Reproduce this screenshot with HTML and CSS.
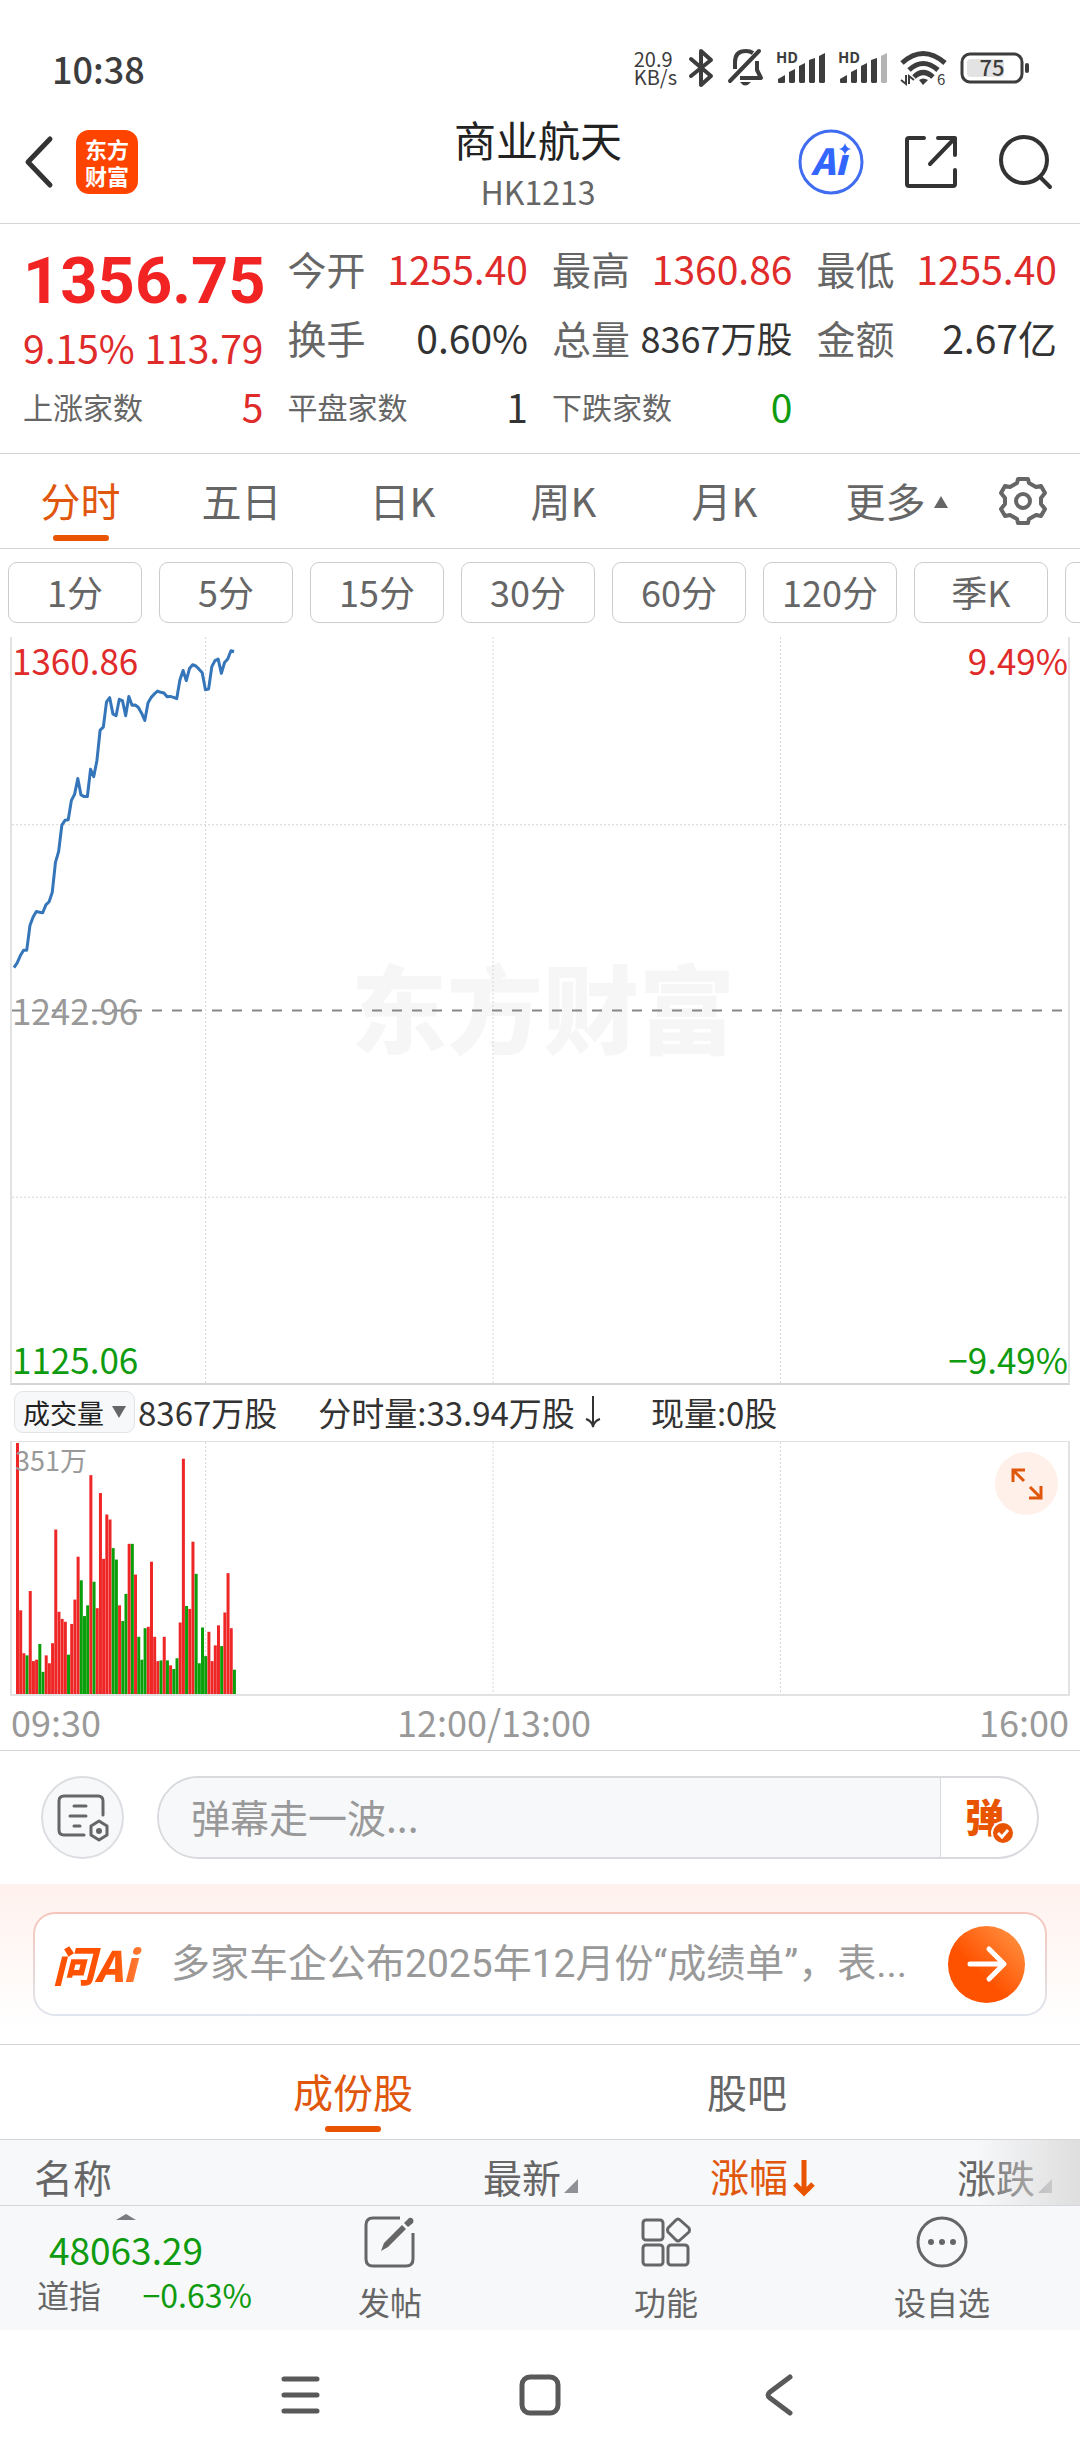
FILE: index.html
```html
<!DOCTYPE html>
<html lang="zh-CN">
<head>
  <meta charset="UTF-8">
  <meta name="viewport" content="width=device-width, initial-scale=1.0">
  <title>商业航天 HK1213</title>
  <link rel="stylesheet" href="styles.css">
</head>
<body>
  <!-- Status bar -->
  <div class="status-bar">
    <span class="clock">10:38</span>
    <div class="status-icons">
      <div class="net-speed"><span>20.9</span><span>KB/s</span></div>
      <svg class="bluetooth" width="24" height="38" viewBox="0 0 24 38" fill="none" stroke="#3d3d3d" stroke-width="4" stroke-linecap="round" stroke-linejoin="round">
        <path d="M2 10 L22 27 L12 36 V2 L22 11 L2 27"/>
      </svg>
      <svg class="bell" width="36" height="39" viewBox="0 0 36 39" fill="none" stroke="#3d3d3d" stroke-width="4">
        <path d="M7 21 V14 Q7 3 18 3 Q22 3 25 5 M29 13 V22 L33 30 H12" stroke-linejoin="round"/>
        <path d="M2 33 L31 3" stroke-linecap="round"/>
        <path d="M12 34 H23 Q17 41 12 34 Z" fill="#3d3d3d" stroke="none"/>
      </svg>
      <svg class="signal" width="50" height="34" viewBox="0 0 50 34" fill="#3d3d3d">
        <text class="hd" x="0" y="12">HD</text>
        <path d="M2 31 V28 L9 24 V31 Q9 32 8 32 H3 Q2 32 2 31 Z M13 21 L19 18 V31 L18 32 H14 L13 31 Z M23 15 L29 12 V31 L28 32 H24 L23 31 Z M33 9 L39 7 V31 L38 32 H34 L33 31 Z M43 5 L49 2 V31 L48 32 H44 L43 31 Z"/>
      </svg>
      <svg class="signal" width="50" height="34" viewBox="0 0 50 34" fill="#3d3d3d">
        <text class="hd" x="0" y="12">HD</text>
        <path d="M2 31 V28 L9 24 V31 Q9 32 8 32 H3 Q2 32 2 31 Z M13 21 L19 18 V31 L18 32 H14 L13 31 Z M23 15 L29 12 V31 L28 32 H24 L23 31 Z M33 9 L39 7 V31 L38 32 H34 L33 31 Z"/>
        <path d="M43 5 L49 2 V31 L48 32 H44 L43 31 Z" fill="#b4b4b4"/>
      </svg>
      <svg class="wifi" width="48" height="38" viewBox="0 0 48 38" fill="none" stroke="#3d3d3d" stroke-width="5">
        <path d="M2 14 Q23 -5 45 14 M9 21 Q23 8 38 21 M14 28 Q23 19 33 28"/>
        <path d="M19 31 Q23 28 28 31 L23 36 Z" fill="#3d3d3d" stroke="none"/>
        <path d="M6 26 V35 L1 31 M9 35 V27 L14 31" stroke-width="2"/>
        <text class="wifi-gen" x="37" y="36">6</text>
      </svg>
      <svg class="battery" width="72" height="32" viewBox="0 0 72 32" fill="none">
        <rect x="7" y="7" width="37" height="18" rx="4" fill="#e3e3e3"/>
        <rect x="2" y="2" width="60" height="28" rx="8" stroke="#3d3d3d" stroke-width="3"/>
        <rect x="65" y="11" width="4" height="10" rx="2" fill="#3d3d3d"/>
        <text class="battery-level" x="32" y="24" text-anchor="middle">75</text>
      </svg>
    </div>
  </div>

  <!-- Header -->
  <header class="header">
    <div class="header-side">
      <button class="icon-btn" type="button" aria-label="返回">
        <svg width="32" height="54" viewBox="0 0 32 54" fill="none" stroke="#333" stroke-width="5" stroke-linecap="round" stroke-linejoin="round"><path d="M28 4 L6 27 L28 50"/></svg>
      </button>
      <a class="brand" href="#">东方<br>财富</a>
    </div>
    <div class="header-title">
      <h1>商业航天</h1>
      <p>HK1213</p>
    </div>
    <div class="header-side header-actions">
      <button class="icon-btn" type="button" aria-label="Ai">
        <svg width="66" height="66" viewBox="0 0 66 66">
          <circle cx="33" cy="33" r="31" fill="#fff" stroke="#3f6cf0" stroke-width="3"/>
          <text class="ai-mark" x="31" y="46" text-anchor="middle">Ai</text>
          <path d="M38 13 H54 V26 H38 Z" fill="#fff"/>
          <path d="M47 14 Q48 19 53 20 Q48 21 47 26 Q46 21 41 20 Q46 19 47 14 Z" fill="#3366ff"/>
        </svg>
      </button>
      <button class="icon-btn" type="button" aria-label="分享">
        <svg width="54" height="54" viewBox="0 0 54 54" fill="none" stroke="#333" stroke-width="4" stroke-linecap="round" stroke-linejoin="round">
          <path d="M20 3 H5 Q3 3 3 5 V49 Q3 51 5 51 H49 Q51 51 51 49 V35 M34 3 H51 V20 M50 4 L26 29"/>
        </svg>
      </button>
      <button class="icon-btn" type="button" aria-label="搜索">
        <svg width="56" height="56" viewBox="0 0 56 56" fill="none" stroke="#333" stroke-width="4" stroke-linecap="round">
          <circle cx="26" cy="26" r="23"/><path d="M42 43 L52 53"/>
        </svg>
      </button>
    </div>
  </header>

  <!-- Quote -->
  <section class="quote">
    <div class="quote-main">
      <div class="price">1356.75</div>
      <div class="quote-cell up"><span>9.15%</span><span>113.79</span></div>
      <div class="quote-cell"><span class="small-label">上涨家数</span><span class="up">5</span></div>
    </div>
    <div class="quote-grid">
      <div class="quote-cell"><span class="label">今开</span><span class="up">1255.40</span></div>
      <div class="quote-cell"><span class="label">最高</span><span class="up">1360.86</span></div>
      <div class="quote-cell"><span class="label">最低</span><span class="up">1255.40</span></div>
      <div class="quote-cell"><span class="label">换手</span><span>0.60%</span></div>
      <div class="quote-cell"><span class="label">总量</span><span class="long-value">8367万股</span></div>
      <div class="quote-cell"><span class="label">金额</span><span>2.67亿</span></div>
      <div class="quote-cell"><span class="small-label">平盘家数</span><span>1</span></div>
      <div class="quote-cell"><span class="small-label">下跌家数</span><span class="down">0</span></div>
    </div>
  </section>

  <!-- Chart tabs -->
  <nav class="chart-tabs">
    <button class="tab active" type="button">分时</button>
    <button class="tab" type="button">五日</button>
    <button class="tab" type="button">日K</button>
    <button class="tab" type="button">周K</button>
    <button class="tab" type="button">月K</button>
    <button class="tab" type="button"><span class="more">更多</span></button>
    <button class="settings" type="button" aria-label="设置">
      <svg width="50" height="50" viewBox="-25 -25 50 50" fill="none" stroke="#666" stroke-width="4" stroke-linejoin="round">
        <path d="M-5 -22 H5 L6 -18 L13 -14 L18 -15 L22 -8 L18 -3 V3 L22 8 L18 15 L13 14 L6 18 L5 22 H-5 L-6 18 L-13 14 L-18 15 L-22 8 L-18 3 V-3 L-22 -8 L-18 -15 L-13 -14 L-6 -18 Z"/>
        <circle r="7"/>
      </svg>
    </button>
  </nav>

  <div class="periods">
    <button type="button">1分</button>
    <button type="button">5分</button>
    <button type="button">15分</button>
    <button type="button">30分</button>
    <button type="button">60分</button>
    <button type="button">120分</button>
    <button type="button">季K</button>
    <button type="button" aria-label="年K"></button>
  </div>

  <!-- Price chart -->
  <section class="chart price-chart">
    <div class="watermark">东方财富</div>
    <svg viewBox="0 0 1058 747" preserveAspectRatio="none">
      <path class="grid-line" d="M194 0 V747 M482 0 V747 M770 0 V747 M0 188 H1058 M0 561 H1058"/>
      <path class="mid-line" d="M0 374 H1058"/>
      <polyline id="price-line" class="price-line"/>
    </svg>
    <span class="axis top-left up">1360.86</span>
    <span class="axis top-right up">9.49%</span>
    <span class="axis mid-left">1242.96</span>
    <span class="axis bottom-left down">1125.06</span>
    <span class="axis bottom-right down">−9.49%</span>
  </section>

  <div class="volume-head">
    <select class="indicator" aria-label="指标"><option>成交量</option></select>
    <span class="volume-total">8367万股</span>
    <span class="volume-minute">分时量:33.94万股
      <svg width="18" height="34" viewBox="0 0 18 34" fill="none" stroke="#333" stroke-width="2"><path d="M9 1 V32 M2 24 Q8 26 9 32 Q10 26 16 24"/></svg>
    </span>
    <span>现量:0股</span>
  </div>

  <!-- Volume chart -->
  <section class="chart volume-chart">
    <svg viewBox="0 0 1058 254" preserveAspectRatio="none">
      <path class="grid-line" d="M194 0 V254 M482 0 V254 M770 0 V254"/>
      <g id="volume-bars"></g>
    </svg>
    <span class="volume-max">351万</span>
    <button class="expand" type="button" aria-label="全屏">
      <svg width="34" height="34" viewBox="0 0 34 34" fill="none" stroke="#e0570c" stroke-width="3">
        <path d="M3 15 V3 H15 M3 3 L14 14 M31 19 V31 H19 M31 31 L20 20"/>
      </svg>
    </button>
  </section>

  <div class="time-axis">
    <span>09:30</span>
    <span class="noon">12:00/13:00</span>
    <span>16:00</span>
  </div>

  <!-- Danmu -->
  <form class="danmu">
    <button class="danmu-settings" type="button" aria-label="弹幕设置">
      <svg width="54" height="50" viewBox="0 0 54 50" fill="none" stroke="#666" stroke-width="3" stroke-linecap="round">
        <path d="M28 42 H8 Q3 42 3 37 V8 Q3 3 8 3 H42 Q47 3 47 8 V22"/>
        <path d="M18 13 H30 M14 23 H30 M18 33 H24"/>
        <path d="M43 28 L51 33 V42 L43 47 L35 42 V33 Z" stroke-linejoin="round"/>
        <circle cx="43" cy="38" r="3" fill="#666" stroke="none"/>
      </svg>
    </button>
    <div class="danmu-box">
      <input type="text" placeholder="弹幕走一波..." aria-label="弹幕">
      <button type="button" class="danmu-toggle">弹
        <svg class="danmu-check" width="24" height="24" viewBox="0 0 24 24" fill="none"><circle cx="12" cy="12" r="11" fill="#e85400" stroke="#fff" stroke-width="2"/><path d="M7 12 L11 16 L17 9" stroke="#fff" stroke-width="3"/></svg>
      </button>
    </div>
  </form>

  <!-- Ask Ai -->
  <section class="ask">
    <a class="ask-box" href="#">
      <span class="ask-logo">问Ai</span>
      <span class="ask-text">多家车企公布2025年12月份“成绩单”，表...</span>
      <span class="ask-go">
        <svg width="40" height="36" viewBox="0 0 40 36" fill="none" stroke="#fff" stroke-width="5" stroke-linecap="round" stroke-linejoin="round"><path d="M3 18 H37 M22 3 L37 18 L22 33"/></svg>
      </span>
    </a>
  </section>

  <!-- Constituents -->
  <nav class="list-tabs">
    <button class="tab active" type="button">成份股</button>
    <button class="tab" type="button">股吧</button>
  </nav>
  <div class="list-wrap">
    <table class="list">
      <thead>
        <tr>
          <th class="name">名称</th>
          <th><span class="sortable">最新</span></th>
          <th class="sorted">涨幅<svg width="22" height="38" viewBox="0 0 22 38" fill="none" stroke="#e85400" stroke-width="5"><path d="M11 1 V34 M2 25 L11 34 L20 25"/></svg></th>
          <th><span class="sortable">涨跌</span></th>
        </tr>
      </thead>
    </table>
  </div>

  <!-- Bottom bar -->
  <footer class="bottom-bar">
    <a class="index" href="#">
      <span class="index-caret"></span>
      <span class="index-value">48063.29</span>
      <span class="index-row"><span>道指</span><span class="down">−0.63%</span></span>
    </a>
    <button type="button">
      <svg width="52" height="52" viewBox="0 0 52 52" fill="none" stroke="#666" stroke-width="3">
        <path d="M36 2 H9 Q2 2 2 9 V43 Q2 50 9 50 H42 Q49 50 49 43 V17"/>
        <path d="M17 35 L20 27 L38 9 L42 13 L24 31 Z M40 7 L45 2 Q47 1 49 3 Q50 5 49 7 L44 11 Z" fill="#666" stroke="none"/>
      </svg>
      发帖
    </button>
    <button type="button">
      <svg width="52" height="52" viewBox="0 0 52 52" fill="none" stroke="#666" stroke-width="3" stroke-linejoin="round">
        <rect x="3" y="4" width="20" height="20" rx="3"/>
        <rect x="3" y="29" width="20" height="20" rx="3"/>
        <rect x="28" y="29" width="20" height="20" rx="3"/>
        <path d="M36 4 Q38 2 40 4 L49 12 Q50 14 49 16 L40 24 Q38 26 36 24 L28 16 Q27 14 28 12 Z"/>
      </svg>
      功能
    </button>
    <button type="button">
      <svg width="52" height="52" viewBox="0 0 52 52" fill="none" stroke="#666" stroke-width="3">
        <circle cx="26" cy="26" r="24"/>
        <g fill="#666" stroke="none"><circle cx="15" cy="26" r="3"/><circle cx="26" cy="26" r="3"/><circle cx="37" cy="26" r="3"/></g>
      </svg>
      设自选
    </button>
  </footer>

  <!-- System navigation -->
  <nav class="system-nav">
    <button type="button" aria-label="菜单"><svg width="42" height="42" viewBox="0 0 42 42" stroke="#595959" stroke-width="5" stroke-linecap="round"><path d="M4 5 H37 M4 21 H37 M4 37 H37"/></svg></button>
    <button type="button" aria-label="主页"><svg width="42" height="42" viewBox="0 0 42 42" fill="none" stroke="#595959" stroke-width="5"><rect x="3" y="3" width="36" height="36" rx="8"/></svg></button>
    <button type="button" aria-label="返回"><svg width="42" height="42" viewBox="0 0 42 42" fill="none" stroke="#595959" stroke-width="5" stroke-linecap="round" stroke-linejoin="round"><path d="M32 3 L12 18 Q8 21 12 24 L32 39"/></svg></button>
  </nav>

  <script src="script.js"></script>
</body>
</html>
```
FILE: styles.css
```css
* {
  box-sizing: border-box;
}
body {
  margin: 0;
  background: #fff;
  color: #333;
  font-family: "Noto Sans CJK SC", sans-serif;
  font-size: 39px;
  line-height: 1;
  overflow-x: hidden;
}
button, input, select {
  font-family: inherit;
  font-size: inherit;
  line-height: inherit;
  color: inherit;
  border: none;
  background: none;
  padding: 0;
  margin: 0;
}
button {
  cursor: pointer;
}
a {
  color: inherit;
  text-decoration: none;
}
svg {
  display: block;
  flex: none;
  overflow: visible;
}
.up {
  color: #e02b2b;
}
.down {
  color: #0f9b0f;
}

/* Status bar */
.status-bar {
  display: flex;
  justify-content: space-between;
  align-items: center;
  height: 101px;
  padding: 34px 48px 0 52px;
  color: #3d3d3d;
}
.clock {
  font-size: 36px;
  font-weight: 500;
}
.status-icons {
  display: flex;
  align-items: center;
  gap: 12px;
}
.net-speed {
  display: flex;
  flex-direction: column;
  font-size: 20px;
  line-height: 18px;
}
.bell {
  margin-left: 3px;
}
.hd {
  font-size: 15px;
  font-weight: 700;
}
.wifi-gen {
  font-size: 15px;
  fill: #3d3d3d;
  stroke: none;
}
.battery-level {
  font-size: 22px;
  font-weight: 500;
  fill: #3d3d3d;
}

/* Header */
.header {
  display: flex;
  align-items: center;
  height: 123px;
  padding: 0 26px 0 22px;
  border-bottom: 1px solid #d4d4d4;
}
.header-side {
  flex: 1;
  display: flex;
  align-items: center;
  gap: 22px;
}
.header-actions {
  justify-content: flex-end;
  gap: 40px;
}
.brand {
  display: flex;
  align-items: center;
  justify-content: center;
  width: 62px;
  height: 64px;
  border-radius: 13px;
  background: #ff4400;
  color: #fff;
  font-size: 22px;
  line-height: 27px;
  font-weight: 700;
}
.ai-mark {
  font-size: 36px;
  font-weight: 900;
  font-style: italic;
  fill: #3366ff;
}
.header-title {
  text-align: center;
}
.header-title h1 {
  margin: 2px 0 0;
  color: #222;
  font-size: 42px;
  line-height: 50px;
  font-weight: 400;
}
.header-title p {
  margin: 6px 0 0;
  color: #666;
  font-size: 32px;
  line-height: 42px;
}

/* Quote */
.quote {
  display: grid;
  grid-template-columns: repeat(4, minmax(0, 1fr));
  gap: 24px;
  padding: 18px 23px 21px;
  border-bottom: 1px solid #d4d4d4;
}
.quote-main {
  display: grid;
  grid-template-columns: minmax(0, 1fr);
  grid-template-rows: 72px 66px 52px;
}
.quote-grid {
  grid-column: span 3;
  display: grid;
  grid-template-columns: repeat(3, minmax(0, 1fr));
  grid-template-rows: 52px 86px 52px;
  column-gap: 24px;
}
.price {
  color: #f22323;
  font-family: Roboto, sans-serif;
  font-size: 65px;
  line-height: 78px;
  font-weight: 700;
}
.quote-cell {
  display: flex;
  justify-content: space-between;
  align-items: center;
  white-space: nowrap;
}
.label {
  color: #666;
}
.small-label {
  color: #666;
  font-size: 30px;
}
.long-value {
  font-size: 36px;
}

/* Tabs */
.chart-tabs {
  display: flex;
  height: 95px;
  border-bottom: 1px solid #d4d4d4;
}
.tab {
  flex: 1;
  position: relative;
  padding-bottom: 2px;
  color: #666;
  font-size: 40px;
}
.tab.active {
  color: #e0570c;
}
.tab.active::after {
  content: "";
  position: absolute;
  left: 50%;
  bottom: 7px;
  width: 56px;
  height: 6px;
  margin-left: -28px;
  border-radius: 3px;
  background: #e85400;
}
.more {
  position: relative;
}
.more::after {
  content: "";
  position: absolute;
  left: 100%;
  top: 50%;
  margin: -4px 0 0 8px;
  border: 7px solid transparent;
  border-top: none;
  border-bottom: 12px solid #666;
}
.settings {
  display: flex;
  justify-content: center;
  align-items: center;
  width: 114px;
}
.periods {
  display: flex;
  gap: 17px;
  padding: 13px 0 14px 8px;
  overflow: hidden;
}
.periods button {
  flex: none;
  width: 134px;
  height: 61px;
  padding-bottom: 3px;
  border: 1px solid #ccc;
  border-radius: 9px;
  color: #666;
  font-size: 36px;
}

/* Charts */
.chart {
  position: relative;
  margin: 0 10px;
  border: 2px solid #e2e2e2;
}
.price-chart {
  height: 748px;
  border-top: none;
  border-bottom-color: #d4d4d4;
}
.price-chart > svg,
.volume-chart > svg {
  position: relative;
  width: 100%;
  height: 100%;
}
.grid-line {
  fill: none;
  stroke: #d6d6d6;
  stroke-dasharray: 2 2;
  vector-effect: non-scaling-stroke;
}
.mid-line {
  stroke: #888;
  stroke-width: 2;
  stroke-dasharray: 10 10;
  vector-effect: non-scaling-stroke;
}
.price-line {
  fill: none;
  stroke: #3575b9;
  stroke-width: 3;
  stroke-linejoin: round;
  vector-effect: non-scaling-stroke;
}
.watermark {
  position: absolute;
  inset: 0;
  display: flex;
  align-items: center;
  justify-content: center;
  padding: 0 0 10px 6px;
  color: #f6f6f6;
  font-size: 96px;
  font-weight: 900;
}
.axis {
  position: absolute;
  color: #999;
  font-size: 35px;
}
.axis.up {
  color: #e02b2b;
}
.axis.down {
  color: #0f9b0f;
}
.top-left,
.mid-left,
.bottom-left {
  left: 0;
}
.top-right,
.bottom-right {
  right: 0;
}
.top-left,
.top-right {
  top: 5px;
}
.mid-left {
  top: 355px;
}
.bottom-left,
.bottom-right {
  bottom: 7px;
}
.volume-head {
  display: flex;
  align-items: center;
  height: 56px;
  padding: 0 0 2px 14px;
  font-size: 33px;
}
.indicator {
  appearance: none;
  height: 42px;
  width: 121px;
  padding-left: 8px;
  border: 1px solid #e2e3e6;
  border-radius: 9px;
  background: #f7f8fa url("data:image/svg+xml,%3Csvg xmlns='http://www.w3.org/2000/svg' width='14' height='12'%3E%3Cpath d='M0 0H14L7 12Z' fill='%23666'/%3E%3C/svg%3E") no-repeat right 8px center;
  color: #222;
  font-size: 27px;
}
.volume-total {
  margin: 0 41px 0 3px;
}
.volume-minute {
  display: flex;
  align-items: center;
  gap: 9px;
  margin-right: 49px;
}
.volume-chart {
  height: 255px;
  border-top-width: 1px;
}
.bar-up {
  fill: #ee2626;
}
.bar-down {
  fill: #0a9f0a;
}
.volume-max {
  position: absolute;
  left: 3px;
  top: 4px;
  color: #999;
  font-size: 27px;
}
.expand {
  position: absolute;
  right: 10px;
  top: 10px;
  display: flex;
  align-items: center;
  justify-content: center;
  width: 63px;
  height: 63px;
  border-radius: 50%;
  background: #fff0e9;
}
.time-axis {
  display: grid;
  grid-template-columns: 1fr auto 1fr;
  align-items: center;
  height: 55px;
  padding: 0 11px 4px;
  border-bottom: 1px solid #d4d4d4;
  color: #999;
  font-size: 36px;
}
.time-axis .noon {
  margin-right: 92px;
}
.time-axis :last-child {
  text-align: right;
}

/* Danmu */
.danmu {
  display: flex;
  gap: 33px;
  padding: 25px 41px;
}
.danmu-settings {
  display: flex;
  align-items: center;
  justify-content: center;
  width: 83px;
  height: 83px;
  border: 2px solid #dcdee2;
  border-radius: 50%;
  background: #f7f8fa;
}
.danmu-box {
  flex: 1;
  display: flex;
  height: 83px;
  border: 2px solid #d8dade;
  border-radius: 42px;
  overflow: hidden;
}
.danmu-box input {
  flex: 1;
  min-width: 0;
  padding: 0 32px 4px;
  background: #f7f8fa;
}
.danmu-box input::placeholder {
  color: #999;
  opacity: 1;
}
.danmu-toggle {
  position: relative;
  width: 97px;
  padding: 0 9px 5px 0;
  border-left: 1px solid #d8dade;
  color: #e85400;
  font-weight: 900;
}
.danmu-check {
  position: absolute;
  right: 22px;
  bottom: 12px;
}

/* Ask Ai */
.ask {
  padding: 28px 33px;
  border-bottom: 1px solid #d4d4d4;
  background: linear-gradient(#fff1ed, #fff 90%);
}
.ask-box {
  display: flex;
  align-items: center;
  height: 104px;
  padding: 0 20px 0 18px;
  border: 2px solid transparent;
  border-radius: 22px;
  background: linear-gradient(#fff, #fff) padding-box, linear-gradient(#f5c5b9, #dfe5ee) border-box;
}
.ask-logo {
  width: 118px;
  background: linear-gradient(100deg, #ff5200 50%, #ff8a4c 80%);
  background-clip: text;
  color: transparent;
  font-size: 42px;
  line-height: 56px;
  font-weight: 900;
  font-style: italic;
}
.ask-text {
  flex: 1;
  color: #999;
  font-family: Roboto, "Noto Sans CJK SC", sans-serif;
  white-space: nowrap;
}
.ask-go {
  display: flex;
  align-items: center;
  justify-content: center;
  width: 77px;
  height: 77px;
  border-radius: 50%;
  background: linear-gradient(45deg, #ff5200 40%, #ff9a4a);
}

/* Constituents */
.list-tabs {
  display: flex;
  height: 94px;
  padding: 0 136px 0 156px;
}
.list-wrap {
  position: relative;
  height: 67px;
  border: solid #d5d7da;
  border-width: 1px 0;
  background: #f7f8fa;
}
.list-wrap::after {
  content: "";
  position: absolute;
  inset: 0 0 0 auto;
  width: 105px;
  background: linear-gradient(90deg, rgba(222, 222, 222, 0), #dedede);
}
.list {
  width: 100%;
  height: 65px;
  padding-right: 28px;
  border-spacing: 0;
  table-layout: fixed;
  color: #666;
}
.list th {
  padding: 8px 0 0;
  font-weight: 400;
  text-align: right;
}
.list th:not(.name) {
  width: 237px;
}
.list .name {
  padding-left: 34px;
  text-align: left;
}
.sortable::after {
  content: "";
  display: inline-block;
  margin-left: 3px;
  border: 7px solid #909196;
  border-top-color: transparent;
  border-left-color: transparent;
}
.list .sorted {
  color: #e0570c;
}
.sorted svg {
  display: inline-block;
  margin-left: 5px;
  vertical-align: -5px;
}

/* Bottom bar */
.bottom-bar {
  display: flex;
  height: 124px;
  background: #f7f8fa;
  color: #666;
  font-size: 32px;
}
.bottom-bar button {
  flex: 1;
  display: flex;
  flex-direction: column;
  align-items: center;
  gap: 17px;
  padding-top: 10px;
}
.index {
  display: flex;
  flex-direction: column;
  align-items: center;
  width: 252px;
  padding-top: 8px;
}
.index-caret {
  border: 10px solid transparent;
  border-top: none;
  border-bottom: 6px solid #7b7c80;
}
.index-value {
  margin-top: 11px;
  color: #0f9b0f;
  font-size: 37px;
}
.index-row {
  display: flex;
  justify-content: space-between;
  width: 100%;
  margin-top: 10px;
  padding-left: 37px;
}

/* System navigation */
.system-nav {
  display: flex;
  justify-content: center;
  height: 130px;
}
.system-nav button {
  display: flex;
  align-items: center;
  justify-content: center;
  width: 239px;
}
```
FILE: script.js
```js
// One value per minute, 331 minutes in a session
const MINUTES = 331;
const WIDTH = 1058;
const PREV_CLOSE = 1242.96;
const HIGH = 1360.86;
const MAX_VOLUME = 351;

const prices = [
  1256.5, 1258.0, 1260.3, 1262.0, 1262.0, 1269.8, 1272.5, 1274.2, 1274.0, 1273.8,
  1276.3, 1277.3, 1280.3, 1289.7, 1293.2, 1301.5, 1303.0, 1303.2, 1309.3, 1311.2,
  1316.2, 1311.0, 1310.5, 1310.5, 1319.1, 1316.8, 1321.9, 1331.5, 1332.4, 1340.4,
  1341.7, 1336.6, 1336.0, 1341.2, 1340.8, 1336.0, 1342.1, 1339.3, 1339.4, 1338.6,
  1336.8, 1334.5, 1340.0, 1341.8, 1342.9, 1343.8, 1343.4, 1343.2, 1342.0, 1342.1,
  1341.8, 1341.4, 1347.3, 1350.3, 1347.1, 1350.9, 1352.1, 1351.7, 1350.7, 1349.6,
  1344.2, 1344.4, 1351.5, 1353.4, 1353.9, 1349.4, 1352.8, 1353.9, 1356.5, 1356.3
];

// Negative values are falling minutes
const volumes = [
  351, 117, 57, -54, 144, 46, 48, -70, -31, 54,
  43, 71, 230, 115, 105, 101, -55, 98, 132, 192,
  -159, -109, -124, 306, -157, 120, 281, 189, 251, 244,
  -204, -188, 124, -102, -140, 210, -210, 167, -80, -48,
  -92, 94, 185, 80, 46, -47, 80, -47, 40, -35,
  -50, 100, 329, -123, 119, 213, -168, -43, -93, -53,
  87, 46, 68, 96, -67, 114, 169, 92, -34
];

const step = WIDTH / MINUTES;

const points = prices.map((price, i) => {
  const y = 374 - (price - PREV_CLOSE) / (HIGH - PREV_CLOSE) * 374;
  return `${2 + i * step},${y}`;
});
document.getElementById('price-line').setAttribute('points', points.join(' '));

const bars = document.getElementById('volume-bars');
volumes.forEach((volume, i) => {
  const height = Math.abs(volume) / MAX_VOLUME * 253;
  const bar = document.createElementNS('http://www.w3.org/2000/svg', 'rect');
  bar.setAttribute('class', volume > 0 ? 'bar-up' : 'bar-down');
  bar.setAttribute('x', 4 + i * step);
  bar.setAttribute('y', 254 - height);
  bar.setAttribute('width', 3);
  bar.setAttribute('height', height);
  bars.appendChild(bar);
});
```
